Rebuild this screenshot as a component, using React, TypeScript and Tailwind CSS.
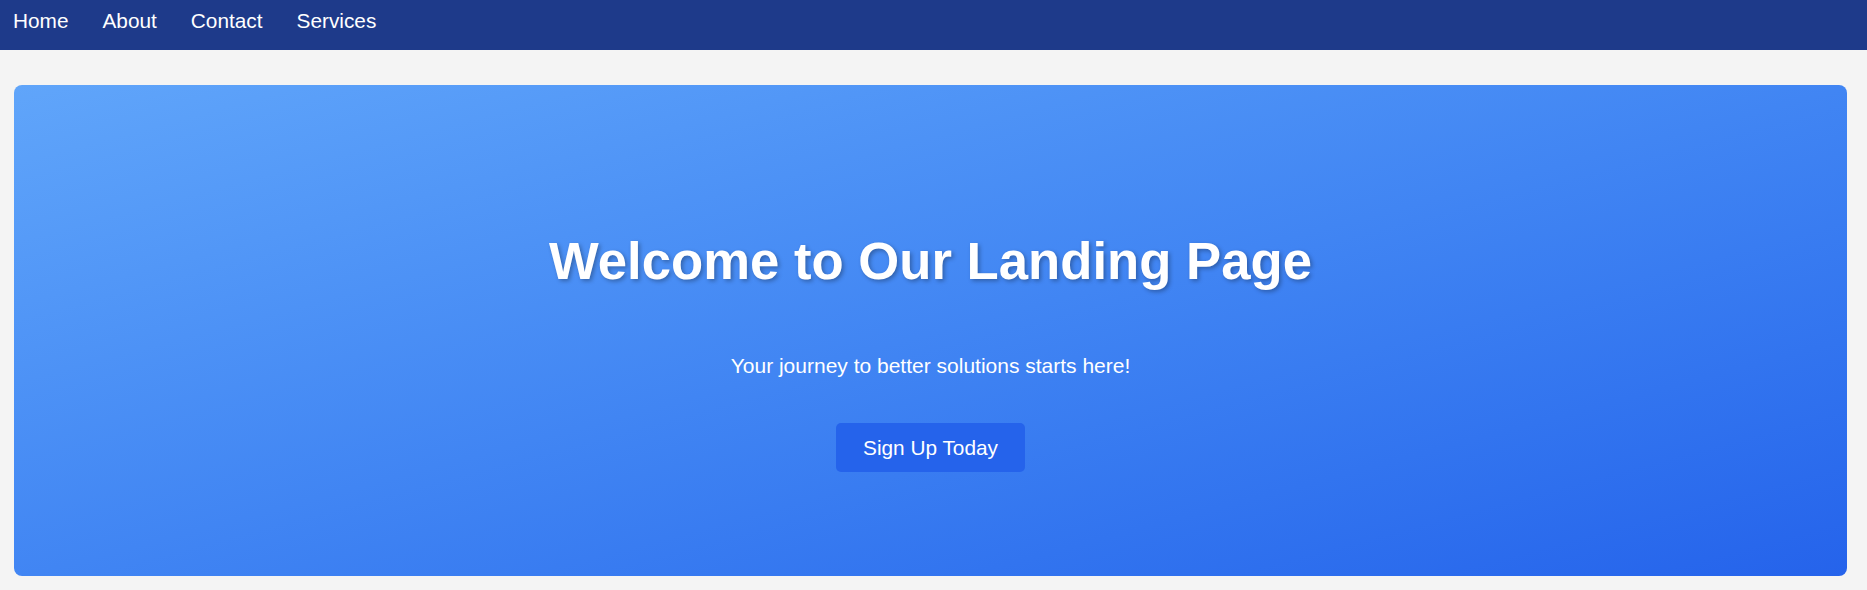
const links = ["Home", "About", "Contact", "Services"];

export default function App() {
  return (
    <div className="min-h-[590px] bg-[#f4f4f4] font-['Liberation_Sans',Arial,sans-serif]">
      {/* Top navigation */}
      <nav className="h-[50px] bg-[#1e3a8a] pl-[13px] pt-[9px]">
        <ul className="flex gap-[34px]">
          {links.map((l) => (
            <li key={l}>
              <a href="#" className="text-[20.8px] leading-[24px] text-white">
                {l}
              </a>
            </li>
          ))}
        </ul>
      </nav>

      {/* Hero */}
      <div className="pl-[14px] pr-[20px] pt-[35px] pb-[14px]">
        <section className="h-[491px] rounded-lg bg-gradient-to-br from-[#60a5fa] to-[#2563eb] flex flex-col items-center pt-[146px]">
          <h1 className="text-[52.7px] leading-[60px] font-bold text-white [text-shadow:2px_2px_4px_rgba(0,0,0,0.3)]">
            Welcome to Our Landing Page
          </h1>
          <p className="mt-[61px] text-[21px] leading-[28px] text-white">
            Your journey to better solutions starts here!
          </p>
          <button className="mt-[43px] h-[49px] px-[27px] rounded-[5px] bg-[#2563eb] text-[20.8px] leading-[28px] text-white">
            Sign Up Today
          </button>
        </section>
      </div>
    </div>
  );
}
